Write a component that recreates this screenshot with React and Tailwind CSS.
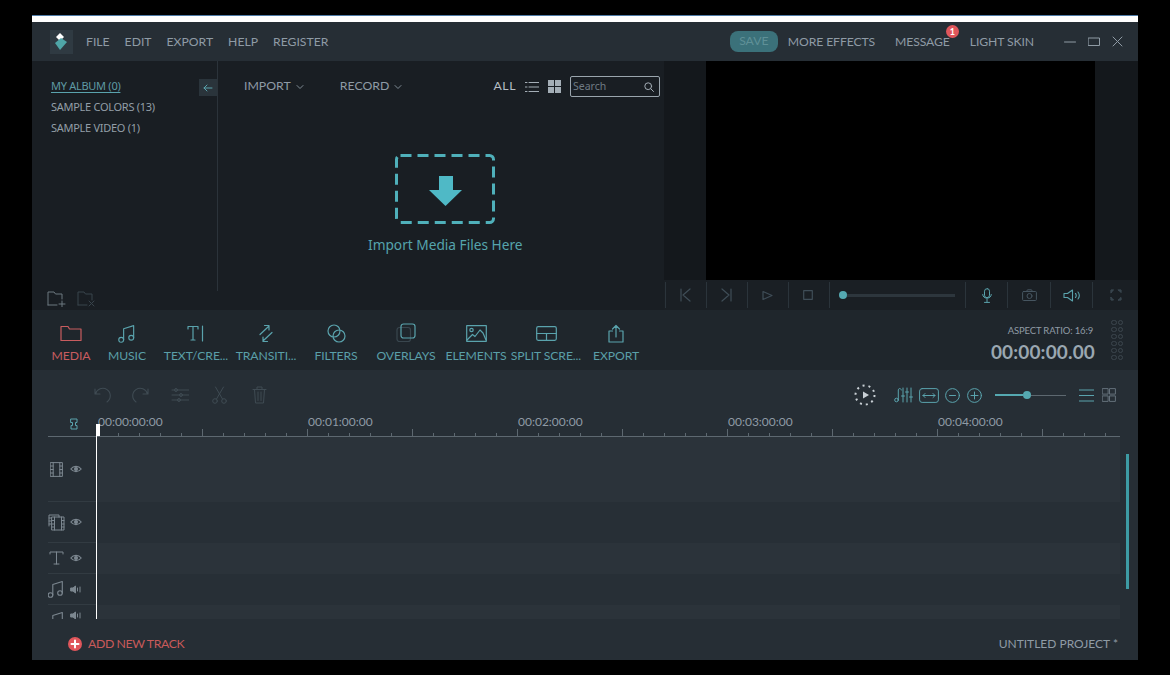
import React from "react";

const Ico = ({ w = 20, h = 20, vb, color = "#5aa3ad", sw = 1.2, fill = "none", children }) => (
  <svg width={w} height={h} viewBox={vb || `0 0 ${w} ${h}`} fill={fill} stroke={color} strokeWidth={sw} strokeLinecap="round" strokeLinejoin="round" className="block shrink-0">
    {children}
  </svg>
);

const Chevron = () => (
  <Ico w={8} h={6} color="#7f8b94" sw={1}>
    <path d="M1 1.5 4 4.5 7 1.5" />
  </Ico>
);

const Eye = () => (
  <Ico w={12} h={8} color="#7c8790" sw={1.2}>
    <path d="M.8 4C3.5.6 8.5.6 11.2 4 8.5 7.4 3.5 7.4.8 4Z" />
    <circle cx="6" cy="4" r="1.4" fill="#7c8790" />
  </Ico>
);

const Speaker = () => (
  <Ico w={12} h={9} color="#7c8790" sw={1}>
    <path d="M1 3h2l2.5-2v7L3 6H1Z" fill="#7c8790" />
    <path d="M7.5 3v3M10 2v5" />
  </Ico>
);

const Note = ({ color = "#7c8790", w = 18, h = 18 }) => (
  <Ico w={w} h={h} vb="0 0 18 18" color={color} sw={1.1}>
    <circle cx="3.5" cy="15" r="2.3" />
    <circle cx="13" cy="13" r="2.3" />
    <path d="M5.8 15V4.5L15.3 1.5V13" />
  </Ico>
);

const tools = [
  {
    label: "MEDIA",
    active: true,
    width: "w-[56px]",
    icon: (
      <Ico w={22} h={17} color="#c85c5f">
        <path d="M1 15.5V1.5h7l1.5 2.5h11.5v11.5Z" />
      </Ico>
    ),
  },
  { label: "MUSIC", width: "w-[56px]", icon: <Note color="#5aa3ad" w={20} h={19} /> },
  {
    label: "TEXT/CRE...",
    width: "ml-[6px] w-[70px]",
    icon: (
      <Ico w={18} h={17}>
        <path d="M1 4V1.5h10V4M6 1.5V15M4 15h4M15.5 1v15" />
      </Ico>
    ),
  },
  {
    label: "TRANSITI...",
    width: "w-[70px]",
    icon: (
      <Ico w={18} h={19}>
        <path d="M3 10.5 11.500 2.500M7.500 1.500h4.500V6M15 8.500 6.500 16.500M10.500 17.500H6V13" />
      </Ico>
    ),
  },
  {
    label: "FILTERS",
    width: "w-[70px]",
    icon: (
      <Ico w={19} h={19}>
        <circle cx="7" cy="7" r="6" />
        <circle cx="12" cy="12" r="6" />
      </Ico>
    ),
  },
  {
    label: "OVERLAYS",
    width: "w-[70px]",
    icon: (
      <Ico w={20} h={20}>
        <rect x="1" y="4.5" width="13.5" height="14" rx="2.5" stroke="#39464e" />
        <rect x="5" y="1" width="14" height="14" rx="2.5" />
      </Ico>
    ),
  },
  {
    label: "ELEMENTS",
    width: "w-[70px]",
    icon: (
      <Ico w={21} h={17}>
        <rect x=".7" y=".7" width="19.6" height="15.6" />
        <circle cx="5.5" cy="5" r="1.7" />
        <path d="M1 15 6.5 9.5l2.5 2L14 5l3 3 3 7" />
      </Ico>
    ),
  },
  {
    label: "SPLIT SCRE...",
    width: "w-[70px]",
    icon: (
      <Ico w={21} h={15}>
        <rect x=".7" y=".7" width="19.6" height="13.6" rx="1.5" />
        <path d="M.7 7.5h19.6M10.5 7.5v6.8" />
      </Ico>
    ),
  },
  {
    label: "EXPORT",
    width: "w-[70px]",
    icon: (
      <Ico w={16} h={19}>
        <path d="M4.5 7H1v11h14V7h-3.5M8 13V1.5M4.5 5 8 1.5 11.5 5" />
      </Ico>
    ),
  },
];

const transportLeft = [
  <Ico w={11} h={14} color="#3f4d57" key="a"><path d="M1 1v12M10 1 3 7l7 6" /></Ico>,
  <Ico w={11} h={14} color="#3f4d57" key="b"><path d="M10 1v12M1 1l7 6-7 6" /></Ico>,
  <Ico w={11} h={11} color="#3f4d57" key="c"><path d="M1 1.5 10 5.5 1 9.5Z" /></Ico>,
  <Ico w={10} h={10} color="#3f4d57" key="d"><rect x=".7" y=".7" width="8.6" height="8.6" /></Ico>,
];

function Film() {
  return (
    <Ico w={13} h={15} color="#7c8790" sw={1}>
      <rect x=".6" y=".6" width="11.8" height="13.8" />
      <path d="M3.2.6v13.8M9.8.6v13.8M.6 4h2.6M.6 7.5h2.6M.6 11h2.6M9.8 4h2.6M9.8 7.5h2.6M9.8 11h2.6" />
    </Ico>
  );
}

function Films() {
  return (
    <Ico w={17} h={17} color="#7c8790" sw={1}>
      <path d="M1 12V1h10v2M1 4h2M1 7h2M1 10h2" />
      <rect x="4" y="3" width="12" height="13" />
      <path d="M6.5 3v13M13.5 3v13M4 6.5h2.5M4 10h2.5M4 13h2.5M13.5 6.5H16M13.5 10H16M13.5 13H16" />
    </Ico>
  );
}

const tracks = [
  { h: "h-[65px]", bg: "bg-[#2b333a]", icon: <Film />, side: <Eye /> },
  { h: "h-[41px]", bg: "bg-[#272f36]", icon: <Films />, side: <Eye /> },
  {
    h: "h-[31px]",
    bg: "bg-[#2b333a]",
    icon: (
      <Ico w={15} h={14} color="#7c8790" sw={1}>
        <path d="M1 3V1h13v2M7.5 1v12M5 13h5" />
      </Ico>
    ),
    side: <Eye />,
  },
  { h: "h-[31px]", bg: "bg-[#272f36]", icon: <Note />, side: <Speaker /> },
  { h: "h-[14px]", bg: "bg-[#2b333a]", icon: <Note />, side: <Speaker />, last: true },
];

const Ruler = () => {
  const ticks = [];
  for (let i = 0; i < 51; i++) {
    const x = 49 + i * 21;
    ticks.push(<path key={i} d={`M${x + 0.5} ${i % 5 === 0 ? 0 : 4}V8`} />);
  }
  return (
    <svg width="1072" height="8" fill="none" stroke="#5d6870" strokeWidth="1" className="block">
      <path d="M0 7.5H1072" />
      {ticks}
    </svg>
  );
};

export default function App() {
  return (
    <div className="h-[675px] w-[1170px] overflow-hidden bg-black pl-[32px] pt-[15px] font-['Lato',sans-serif]">
      <div className="relative flex h-[645px] w-[1106px] flex-col">
        <div className="h-[7px] border-t border-[#4f7ba6] bg-white" />

        {/* title bar */}
        <div className="flex h-[39px] items-center bg-[#262e35] pl-[18px] text-[12.2px] text-[#8f9ba5]">
          <div className="flex h-[24px] w-[23px] items-center justify-center bg-[#2f3a42]">
            <Ico w={13} h={17} color="none" sw={0}>
              <path d="M5 0l4 4-4 4-4-4Z" fill="#fff" />
              <path d="M0 10l6-5 6 4-7 8Z" fill="#4fa6a8" />
            </Ico>
          </div>
          <div className="ml-[13px] flex gap-[15px] pt-[1px]">
            <span>FILE</span>
            <span>EDIT</span>
            <span>EXPORT</span>
            <span>HELP</span>
            <span>REGISTER</span>
          </div>
          <div className="ml-auto flex h-[21px] w-[48px] items-center justify-center rounded-lg bg-[#3b717a] text-[#5f9097]">SAVE</div>
          <span className="ml-[10px] pt-[1px] tracking-[-0.1px]">MORE EFFECTS</span>
          <span className="relative ml-[20px] pt-[1px] tracking-[-0.1px]">
            MESSAGE
            <span className="absolute right-[-9px] top-[-7px] flex h-[13px] w-[13px] items-center justify-center rounded-full bg-[#e0565b] text-[9px] font-bold text-white">1</span>
          </span>
          <span className="ml-[20px] pt-[1px] tracking-[-0.1px]">LIGHT SKIN</span>
          <div className="ml-[30px] mr-[15px] flex items-center gap-[12px]">
            <Ico w={12} h={12} color="#8f9ba5" sw={1}><path d="M.5 6h11" /></Ico>
            <Ico w={12} h={10} color="#8f9ba5" sw={1}><rect x=".5" y="1" width="11" height="7.5" /></Ico>
            <Ico w={11} h={11} color="#8f9ba5" sw={1}><path d="M1 1l9 9M10 1l-9 9" /></Ico>
          </div>
        </div>

        {/* library + preview */}
        <div className="flex h-[249px]">
          <div className="flex w-[632px] flex-col bg-[#191e23]">
            <div className="flex h-[230px]">
              <div className="w-[186px] border-r border-[#2b333a] pt-[17px]">
                <div className="relative flex flex-col gap-[6px] pl-[19px] font-['Noto_Sans',sans-serif] text-[11px] leading-[15px] tracking-[-0.28px] text-[#939ea7]">
                  <span className="w-fit text-[#5f9aa3] underline decoration-[#5aa3ad] underline-offset-2">MY ALBUM (0)</span>
                  <span>SAMPLE COLORS (13)</span>
                  <span>SAMPLE VIDEO (1)</span>
                  <div className="absolute right-0 top-[1px] flex h-[17px] w-[18px] items-center justify-center bg-[#2a343b]">
                    <Ico w={10} h={8} sw={1}><path d="M9 4H1M4 1 1 4l3 3" /></Ico>
                  </div>
                </div>
              </div>
              <div className="flex flex-1 flex-col">
                <div className="flex h-[36px] items-end text-[12.3px] text-[#8f9ba5]">
                  <div className="flex h-[21px] w-full items-center pl-[26px] pr-[4px]">
                    <span>IMPORT</span>
                    <span className="ml-[5px]"><Chevron /></span>
                    <span className="ml-[36px]">RECORD</span>
                    <span className="ml-[5px]"><Chevron /></span>
                    <span className="ml-auto tracking-[0.5px] text-[#b5bec5]">ALL</span>
                    <span className="ml-[9px]">
                      <Ico w={14} h={12} color="#a4aeb6" sw={1}><path d="M4 1.5h10M4 6h10M4 10.5h10M0 1.5h2M0 6h2M0 10.5h2" /></Ico>
                    </span>
                    <div className="ml-[9px] grid grid-cols-2 gap-[1px]">
                      <i className="h-[6px] w-[6px] bg-[#a4aeb6]" />
                      <i className="h-[6px] w-[6px] bg-[#a4aeb6]" />
                      <i className="h-[6px] w-[6px] bg-[#a4aeb6]" />
                      <i className="h-[6px] w-[6px] bg-[#a4aeb6]" />
                    </div>
                    <div className="ml-[9px] flex h-[21px] w-[90px] items-center justify-between rounded-[2px] border border-[#9aa5ad] pl-[2px] pr-[5px] font-['Noto_Sans',sans-serif] text-[10.5px] text-[#6f7b84]">
                      Search
                      <Ico w={10} h={10} color="#a4aeb6" sw={1}><circle cx="4.2" cy="4.2" r="3.4" /><path d="m6.8 6.8 2.7 2.7" /></Ico>
                    </div>
                  </div>
                </div>
                <div className="ml-[177px] mt-[57px] h-[70px] w-[100px]">
                  <svg width="100" height="70" fill="none" className="block">
                    <rect x="1.5" y="1.5" width="97" height="67" rx="4" stroke="#4fb0ba" strokeWidth="3" strokeDasharray="11 6" />
                    <path d="M44 22h14v14h9L50.5 52 34 36h10Z" fill="#4fb9c6" />
                  </svg>
                </div>
                <div className="ml-[150px] mt-[12px] w-[154px] whitespace-nowrap text-center font-['Noto_Sans',sans-serif] text-[13.7px] leading-[18px] text-[#55a4ad]">
                  Import Media Files Here
                </div>
              </div>
            </div>
            <div className="flex h-[19px] items-start gap-[11px] pl-[15px]">
              <Ico w={19} h={16} color="#6d7880" sw={1}>
                <path d="M1 14V1h6l1.5 2H15v5M1 14h9M15 10v6M12 13h6" />
              </Ico>
              <Ico w={19} h={16} color="#39444c" sw={1}>
                <path d="M1 14V1h6l1.5 2H15v6M1 14h9M12 10l5 5M17 10l-5 5" />
              </Ico>
            </div>
          </div>

          <div className="flex w-[474px] flex-col bg-[#14181c]">
            <div className="ml-[42px] h-[219px] w-[389px] bg-black" />
            <div className="flex h-[30px] items-center bg-[#1a1f24] pl-[1px]">
              {transportLeft.map((icon) => (
                <div key={icon.key} className="flex h-[26px] w-[41px] items-center justify-center border-l border-[#2b343b] pr-[2px]">
                  {icon}
                </div>
              ))}
              <div className="flex h-[26px] w-[136px] items-center border-l border-[#2b343b] pl-[9px] pr-[10px]">
                <i className="h-[8px] w-[8px] shrink-0 rounded-full bg-[#55a9b1]" />
                <i className="h-[3px] flex-1 bg-[#2d363d]" />
              </div>
              <div className="flex h-[26px] w-[42px] items-center justify-center border-l border-[#2b343b]">
                <Ico w={10} h={15} sw={1}><rect x="2.5" y=".7" width="5" height="9" rx="2.5" /><path d="M.7 6.5c0 5 8.6 5 8.6 0M5 11v3M2.5 14.4h5" /></Ico>
              </div>
              <div className="flex h-[26px] w-[43px] items-center justify-center border-l border-[#2b343b]">
                <Ico w={15} h={12} color="#465560" sw={1}><rect x=".6" y="2.5" width="13.8" height="9" rx="1" /><circle cx="7.5" cy="7" r="2.5" /><path d="M4.5 2.5 5.5.8h4l1 1.7" /></Ico>
              </div>
              <div className="flex h-[26px] w-[42px] items-center justify-center border-l border-[#2b343b]">
                <Ico w={18} h={13} sw={1.1}><path d="M1 4.5h3.5L9.500 1v11L4.500 8.500H1ZM12.500 4.500c1 1 1 3 0 4M15 3c1.500 2 1.500 5 0 7" /></Ico>
              </div>
              <div className="flex h-[26px] w-[46px] items-center justify-center border-l border-[#2b343b]">
                <Ico w={12} h={12} color="#465560" sw={.9}><path d="M1 3.5V1h2.500L1 3.500M8.500 1H11v2.500L8.500 1M1 8.500V11h2.500L1 8.500M8.500 11H11V8.500L8.500 11" /></Ico>
              </div>
            </div>
          </div>
        </div>

        {/* tool row */}
        <div className="flex h-[60px] bg-[#1f262c]">
          <div className="flex pl-[11px] pt-[12px]">
            {tools.map((t) => (
              <div key={t.label} className={`flex flex-col items-center ${t.width}`}>
                <div className="flex h-[22px] items-center justify-center">{t.icon}</div>
                <span className={`mt-[4px] whitespace-nowrap text-[12.2px] leading-[15px] tracking-[-0.1px] ${t.active ? "text-[#c85c5f]" : "text-[#5a9fa8]"}`}>
                  {t.label}
                </span>
              </div>
            ))}
          </div>
          <div className="ml-auto flex flex-col items-end pt-[15px]">
            <span className="mr-[2px] text-[9.5px] leading-[12px] tracking-[-0.15px] text-[#8f9ba5]">ASPECT RATIO: 16:9</span>
            <span className="mt-[4px] text-[19px] font-bold leading-[22px] tracking-[0.15px] text-[#9aa7b1]">00:00:00.00</span>
          </div>
          <div className="ml-[16px] mr-[15px] mt-[10px] grid h-fit grid-cols-2 gap-x-[1px] gap-y-[2px]">
            {Array.from({ length: 12 }).map((_, i) => (
              <i key={i} className="h-[5px] w-[5.5px] rounded-full border border-[#3c464e]" />
            ))}
          </div>
        </div>

        {/* timeline */}
        <div className="relative flex flex-1 flex-col bg-[#262e35]">
          <div className="flex h-[44px] items-center pt-[6px]">
            <div className="ml-[61px] flex items-center">
              <Ico w={20} h={18} color="#3f4b53" sw={1.1}><path d="M2 3v5h5M2.500 8A7.500 7.500 0 1 1 14 16" /></Ico>
              <span className="ml-[17px]"><Ico w={20} h={18} color="#3f4b53" sw={1.1}><path d="M18 3v5h-5M17.500 8A7.500 7.500 0 1 0 6 16" /></Ico></span>
              <span className="ml-[21px]"><Ico w={18} h={16} color="#3f4b53" sw={1}><path d="M1 3h17M1 8h17M1 13h17" /><circle cx="5" cy="3" r="1.500" /><circle cx="10" cy="8" r="1.500" /><circle cx="8" cy="13" r="1.500" /></Ico></span>
              <span className="ml-[23px]">
                <Ico w={15} h={18} color="#3f4b53" sw={1}><circle cx="3" cy="15" r="2.300" /><circle cx="12" cy="15" r="2.300" /><path d="M4.500 13 11.500 1M10.500 13 3.500 1" /></Ico>
              </span>
              <span className="ml-[25px]">
                <Ico w={15} h={18} color="#3f4b53" sw={1}><path d="M1 3.500h13M5 3.500V1h5v2.500M2.500 3.500 3.500 17h8l1-13.500M6 6v8.500M9 6v8.500" /></Ico>
              </span>
            </div>
            <div className="ml-[587px]">
              <svg width="22" height="22" fill="none" className="block">
                <circle cx="11" cy="11" r="9.5" stroke="#c9d0d5" strokeWidth="2" strokeDasharray="2 4" />
                <path d="M9 7.500 15 11 9 14.500Z" fill="#c9d0d5" />
              </svg>
            </div>
            <div className="ml-[18px] flex items-center gap-[5px]">
              <Ico w={20} h={16} sw={1}><circle cx="2.500" cy="13" r="1.800" /><path d="M4.300 13V3c0-2 3-2 3 0M9 1v14M13 1v14M17 1v14M7.500 9h3M11.500 5h3M15.500 10h3" /></Ico>
              <Ico w={20} h={15} sw={1}><rect x=".6" y=".6" width="18.800" height="13.800" rx="2.500" /><path d="M4 7.500h12M6 5.500l-2 2 2 2M14 5.500l2 2-2 2" /></Ico>
              <span className="ml-[1px]"><Ico w={15} h={15} sw={1}><circle cx="7.500" cy="7.500" r="6.900" /><path d="M4.500 7.500h6" /></Ico></span>
              <span className="ml-[2px]"><Ico w={15} h={15} sw={1}><circle cx="7.500" cy="7.500" r="6.900" /><path d="M4 7.500h7M7.500 4v7" /></Ico></span>
            </div>
            <div className="ml-[13px] flex w-[71px] items-center">
              <i className="h-[2px] w-[28px] bg-[#55a9b1]" />
              <i className="h-[8px] w-[8px] shrink-0 rounded-full bg-[#55a9b1]" />
              <i className="h-[1px] flex-1 bg-[#5d6870]" />
            </div>
            <div className="ml-[13px] flex items-center gap-[8px]">
              <Ico w={15} h={13} sw={1}><path d="M0 1h15M0 6.500h15M0 12h15" /></Ico>
              <Ico w={14} h={14} color="#64707a" sw={1}><rect x=".6" y=".6" width="5.500" height="5.500" /><rect x="7.900" y=".6" width="5.500" height="5.500" /><rect x=".6" y="7.900" width="5.500" height="5.500" /><rect x="7.900" y="7.900" width="5.500" height="5.500" /></Ico>
            </div>
          </div>

          {/* ruler */}
          <div className="relative ml-[16px] w-[1072px] overflow-hidden">
            <div className="flex h-[15px] items-center pl-[50px] text-[12px] leading-[15px] text-[#8f9ba5]">
              {["00:00:00:00", "00:01:00:00", "00:02:00:00", "00:03:00:00", "00:04:00:00"].map((t) => (
                <span key={t} className="w-[210px] shrink-0">{t}</span>
              ))}
            </div>
            <Ruler />
            <div className="absolute left-[22px] top-[4px]">
              <Ico w={8} h={12} sw={1}><path d="M1 1h6v3.500H5.500v3H7V11H1V7.500h1.500v-3H1Z" /></Ico>
            </div>
          </div>

          {/* tracks */}
          <div className="ml-[16px] flex h-[182px] w-[1072px] flex-col overflow-hidden">
            {tracks.map((tr, i) => (
              <div key={i} className={`flex shrink-0 ${tr.h}`}>
                <div className={`flex w-[49px] gap-[6px] overflow-hidden ${tr.last ? "items-start pt-[6px]" : "items-center border-b border-[#323b42]"}`}>
                  <div className="flex w-[16px] justify-center">{tr.icon}</div>
                  {tr.side}
                </div>
                <div className={`flex-1 ${tr.bg}`} />
              </div>
            ))}
          </div>

          {/* footer */}
          <div className="flex flex-1 items-center pl-[36px] pr-[20px] pt-[9px] text-[12.3px] tracking-[-0.4px]">
            <Ico w={14} h={14} color="#fff" sw={2}>
              <circle cx="7" cy="7" r="7" fill="#e0565b" stroke="none" />
              <path d="M7 3.500v7M3.500 7h7" />
            </Ico>
            <span className="ml-[6px] text-[#c95a5a]">ADD NEW TRACK</span>
            <span className="ml-auto text-[12px] tracking-normal text-[#8f9ba5]">UNTITLED PROJECT *</span>
          </div>

          {/* playhead and scrollbar sit over the tracks */}
          <div className="absolute left-[64px] top-[54px] h-[195px] w-[1px] bg-white" />
          <div className="absolute left-[65px] top-[54px] h-[12px] w-[3px] bg-white" />
          <div className="absolute left-[1094px] top-[84px] h-[135px] w-[3px] bg-[#3d9aa3]" />
        </div>
      </div>
    </div>
  );
}
